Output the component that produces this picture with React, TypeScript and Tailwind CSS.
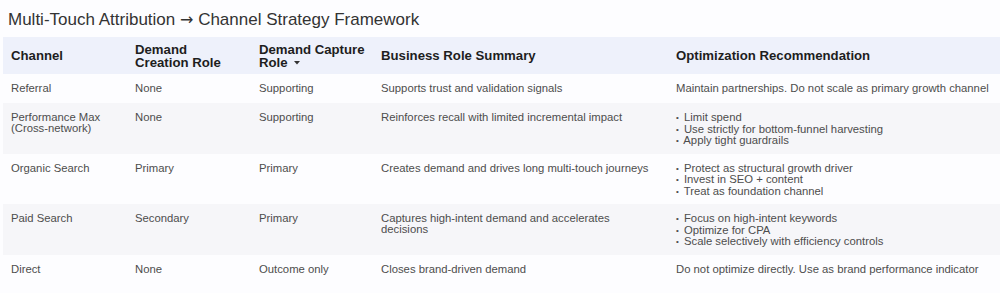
import React from "react";

type Row = {
  channel: React.ReactNode;
  creation: string;
  capture: string;
  summary: React.ReactNode;
  rec: React.ReactNode;
  alt?: boolean;
};

const Bullets = ({ items }: { items: string[] }) => (
  <div className="flex flex-col">
    {items.map((t) => (
      <div key={t} className="whitespace-nowrap h-[11.5px] leading-[11.5px]">
        <span className="text-[8px] leading-[0px] mr-[2px] relative top-[-1px]">•</span> {t}
      </div>
    ))}
  </div>
);

const rows: Row[] = [
  {
    channel: "Referral",
    creation: "None",
    capture: "Supporting",
    summary: "Supports trust and validation signals",
    rec: "Maintain partnerships. Do not scale as primary growth channel",
  },
  {
    channel: (
      <>
        Performance Max
        <br />
        (Cross-network)
      </>
    ),
    creation: "None",
    capture: "Supporting",
    summary: "Reinforces recall with limited incremental impact",
    rec: (
      <Bullets
        items={[
          "Limit spend",
          "Use strictly for bottom-funnel harvesting",
          "Apply tight guardrails",
        ]}
      />
    ),
    alt: true,
  },
  {
    channel: "Organic Search",
    creation: "Primary",
    capture: "Primary",
    summary: "Creates demand and drives long multi-touch journeys",
    rec: (
      <Bullets
        items={[
          "Protect as structural growth driver",
          "Invest in SEO + content",
          "Treat as foundation channel",
        ]}
      />
    ),
  },
  {
    channel: "Paid Search",
    creation: "Secondary",
    capture: "Primary",
    summary: (
      <>
        Captures high-intent demand and accelerates
        <br />
        decisions
      </>
    ),
    rec: (
      <Bullets
        items={[
          "Focus on high-intent keywords",
          "Optimize for CPA",
          "Scale selectively with efficiency controls",
        ]}
      />
    ),
    alt: true,
  },
  {
    channel: "Direct",
    creation: "None",
    capture: "Outcome only",
    summary: "Closes brand-driven demand",
    rec: "Do not optimize directly. Use as brand performance indicator",
  },
];

export default function App() {
  const td = "pl-[8px] pr-[4px] pt-[9px] pb-[7px] align-top whitespace-nowrap";
  const th = "pl-[8px] pr-[4px] text-left align-middle font-bold";
  return (
    <div
      className="w-[1000px] h-[293px] bg-[#fdfdff] overflow-hidden"
      style={{ fontFamily: '"Liberation Sans", Arial, sans-serif' }}
    >
      <div className="pl-[8px] pt-[10px] text-[17px] leading-[20px] text-[#333333]">
        Multi-Touch Attribution{" "}
        <span style={{ fontFamily: '"DejaVu Sans", sans-serif' }} className="text-[16px]">
          →
        </span>{" "}
        Channel Strategy Framework
      </div>
      <table className="ml-[3px] mt-[7px] w-[997px] table-fixed border-collapse">
        <colgroup>
          <col className="w-[124px]" />
          <col className="w-[124px]" />
          <col className="w-[122px]" />
          <col className="w-[295px]" />
          <col className="w-[332px]" />
        </colgroup>
        <thead>
          <tr className="h-[37px] bg-[#eef1fb] text-[13.2px] leading-[13px] text-[#1e1e1e]">
            <th className={th}>Channel</th>
            <th className={th}>
              Demand
              <br />
              Creation Role
            </th>
            <th className={th}>
              Demand Capture
              <br />
              Role
              <svg
                width="6"
                height="4"
                viewBox="0 0 6 4"
                className="inline-block ml-[6px] align-middle"
              >
                <path d="M0 0 L6 0 L3 3.5 Z" fill="#333" />
              </svg>
            </th>
            <th className={th}>Business Role Summary</th>
            <th className={th}>Optimization Recommendation</th>
          </tr>
        </thead>
        <tbody className="text-[11.3px] leading-[11px] text-[#4d4d4d]">
          {rows.map((r, i) => (
            <tr
              key={i}
              className={`h-[29px] ${r.alt ? "bg-[#f6f6f9]" : "bg-[#fdfdff]"}`}
            >
              <td className={td}>{r.channel}</td>
              <td className={td}>{r.creation}</td>
              <td className={td}>{r.capture}</td>
              <td className={td}>{r.summary}</td>
              <td className={td}>{r.rec}</td>
            </tr>
          ))}
        </tbody>
      </table>
    </div>
  );
}
